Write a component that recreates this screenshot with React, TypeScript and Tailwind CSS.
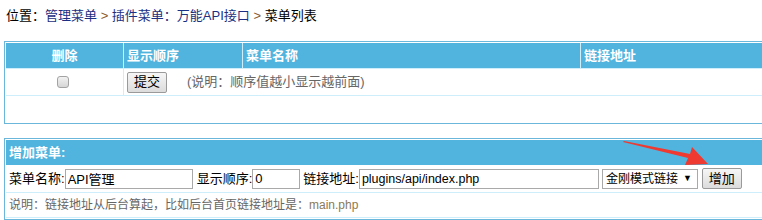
import { type JSX } from "react";

const font = {
    fontFamily: '"Liberation Sans", "Noto Sans CJK SC", sans-serif',
};

function Arrow(): JSX.Element {
    // red annotation arrow pointing at the 增加 button
    return (
        <svg
            className="absolute left-0 top-0 pointer-events-none"
            width="762"
            height="220"
            viewBox="0 0 762 220"
        >
            <polygon
                points="624,141 690,154 692,147 708,164 685,165 688,158 623,142"
                fill="#ee3a31"
            />
        </svg>
    );
}

function MenuListTable(): JSX.Element {
    return (
        <div className="ml-[4px] w-[790px] border border-[#6bb6db] p-px">
            <div className="grid grid-cols-[118px_119px_338px_1fr] h-[25px] bg-[#50b4de] text-white font-bold text-[13px] leading-[25px]">
                <div className="text-center border-r border-[#cdeefa]">删除</div>
                <div className="pl-[3px] border-r border-[#cdeefa]">显示顺序</div>
                <div className="pl-[3px] border-r border-[#cdeefa]">菜单名称</div>
                <div className="pl-[3px]">链接地址</div>
            </div>
            <div className="grid grid-cols-[118px_119px_338px_1fr] h-[28px] border-t border-[#cdeefa] border-b text-[12px]">
                <div className="flex items-center justify-center border-r border-[#cdeefa]">
                    <span className="block w-[12px] h-[12px] -ml-[3px] rounded-[3px] border border-[#a3a3a3] bg-gradient-to-b from-[#f2f2f2] to-[#d6d6d6]" />
                </div>
                <div className="col-span-3 flex items-center pl-[3px]">
                    <button className="h-[21px] w-[40px] border border-[#9a9a9a] rounded-[2px] bg-gradient-to-b from-[#f6f6f6] to-[#dcdcdc] text-[13px] leading-[18px] text-black">
                        提交
                    </button>
                    <span className="ml-[20px] text-[13px] text-[#666]">(说明：顺序值越小显示越前面)</span>
                </div>
            </div>
            <div className="h-[26px]" />
        </div>
    );
}

function AddMenuTable(): JSX.Element {
    return (
        <div className="ml-[4px] mt-[14px] w-[790px] border border-[#6bb6db] p-px">
            <div className="h-[25px] bg-[#50b4de] text-white font-bold text-[13px] leading-[25px] pl-[3px]">
                增加菜单:
            </div>
            <div className="flex items-center h-[28px] pl-[3px] border-b border-[#cdeefa] text-[13px] text-black">
                <span className="shrink-0">菜单名称:</span>
                <input
                    className="w-[128px] h-[20px] border border-[#a9a9a9] px-[2px] text-[13px] outline-none"
                    defaultValue="API管理"
                />
                <span className="ml-[4px] shrink-0">显示顺序:</span>
                <input
                    className="w-[48px] h-[20px] border border-[#a9a9a9] px-[2px] text-[13px] outline-none"
                    defaultValue="0"
                />
                <span className="ml-[3px] shrink-0">链接地址:</span>
                <input
                    className="w-[240px] h-[20px] border border-[#a9a9a9] px-[2px] text-[12.5px] outline-none"
                    defaultValue="plugins/api/index.php"
                />
                <div className="ml-[3px] w-[96px] shrink-0 h-[20px] border border-[#a9a9a9] flex items-center justify-between pl-[3px] pr-[5px] text-[12px]">
                    <span>金刚模式链接</span>
                    <span className="text-[9px]">▼</span>
                </div>
                <button className="ml-[4px] h-[21px] w-[40px] shrink-0 border border-[#9a9a9a] rounded-[2px] bg-gradient-to-b from-[#f6f6f6] to-[#dcdcdc] text-[13px] leading-[18px]">
                    增加
                </button>
            </div>
            <div className="h-[25px] pl-[3px] border-b border-[#cdeefa] flex items-center text-[12px] text-[#666]">
                <span>说明：链接地址从后台算起，比如后台首页链接地址是：</span>
                <span className="text-[#8a7a58]">main.php</span>
            </div>
        </div>
    );
}

export default function App(): JSX.Element {
    return (
        <div className="relative w-[762px] h-[220px] overflow-hidden bg-white" style={font}>
            <div className="h-[41px] pl-[6px] pt-[7px] text-[13px] leading-[18px] text-black">
                位置：<span className="text-[#1c2f82]">管理菜单</span>
                <span className="text-[#8b5a2b]"> &gt; </span>
                <span className="text-[#1c2f82]">插件菜单：万能API接口</span>
                <span className="text-[#8b5a2b]"> &gt; </span>
                菜单列表
            </div>
            <MenuListTable />
            <AddMenuTable />
            <Arrow />
        </div>
    );
}
